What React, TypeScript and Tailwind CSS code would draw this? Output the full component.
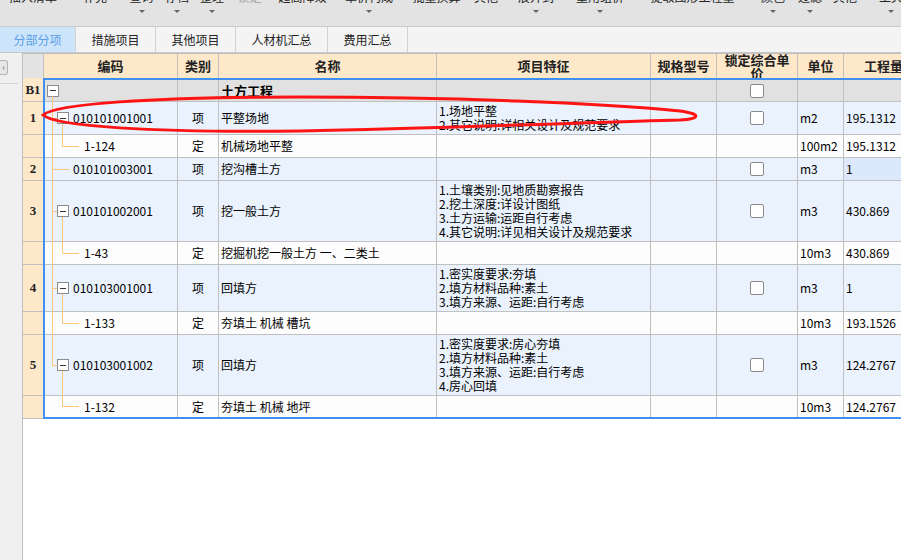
import React from 'react'

type Row = {
  kind: 'group' | 'item' | 'sub'
  code?: string
  box?: boolean
  type?: string
  name?: string
  feats?: string[]
  check?: boolean
  unit?: string
  qty?: string
  h: number
  selQty?: boolean
}

const rows: Row[] = [
  { kind: 'group', box: true, name: '土方工程', check: true, h: 22 },
  { kind: 'item', code: '010101001001', box: true, type: '项', name: '平整场地', feats: ['1.场地平整', '2.其它说明:详相关设计及规范要求'], check: true, unit: 'm2', qty: '195.1312', h: 33 },
  { kind: 'sub', code: '1-124', type: '定', name: '机械场地平整', unit: '100m2', qty: '195.1312', h: 23 },
  { kind: 'item', code: '010101003001', type: '项', name: '挖沟槽土方', check: true, unit: 'm3', qty: '1', h: 23, selQty: true },
  { kind: 'item', code: '010101002001', box: true, type: '项', name: '挖一般土方', feats: ['1.土壤类别:见地质勘察报告', '2.挖土深度:详设计图纸', '3.土方运输:运距自行考虑', '4.其它说明:详见相关设计及规范要求'], check: true, unit: 'm3', qty: '430.869', h: 61 },
  { kind: 'sub', code: '1-43', type: '定', name: '挖掘机挖一般土方 一、二类土', unit: '10m3', qty: '430.869', h: 23 },
  { kind: 'item', code: '010103001001', box: true, type: '项', name: '回填方', feats: ['1.密实度要求:夯填', '2.填方材料品种:素土', '3.填方来源、运距:自行考虑'], check: true, unit: 'm3', qty: '1', h: 47 },
  { kind: 'sub', code: '1-133', type: '定', name: '夯填土 机械 槽坑', unit: '10m3', qty: '193.1526', h: 23 },
  { kind: 'item', code: '010103001002', box: true, type: '项', name: '回填方', feats: ['1.密实度要求:房心夯填', '2.填方材料品种:素土', '3.填方来源、运距:自行考虑', '4.房心回填'], check: true, unit: 'm3', qty: '124.2767', h: 61 },
  { kind: 'sub', code: '1-132', type: '定', name: '夯填土 机械 地坪', unit: '10m3', qty: '124.2767', h: 21 },
]

const nums = [
  { n: 'B1', h: 24 },
  { n: '1', h: 33 },
  { n: '', h: 23 },
  { n: '2', h: 23 },
  { n: '3', h: 61 },
  { n: '', h: 23 },
  { n: '4', h: 47 },
  { n: '', h: 23 },
  { n: '5', h: 61 },
  { n: '', h: 23 },
]

const tools = [
  { w: 66, t: '插入清单' },
  { w: 58, t: '补充' },
  { w: 35, t: '查询', dd: true },
  { w: 36, t: '存档', dd: true },
  { w: 34, t: '整理', dd: true },
  { w: 41, t: '锁定', off: true },
  { w: 65, t: '超高降效' },
  { w: 68, t: '单价构成', dd: true },
  { w: 67, t: '批量换算' },
  { w: 32, t: '其他' },
  { w: 68, t: '展开到', dd: true },
  { w: 60, t: '重用组价', dd: true },
  { w: 125, t: '提取图形工程量' },
  { w: 36, t: '颜色', dd: true },
  { w: 38, t: '过滤', dd: true },
  { w: 32, t: '其他' },
  { w: 60, t: '工具', dd: true },
]

const tabs = [
  { t: '分部分项', w: 'w-[76px]', active: true },
  { t: '措施项目', w: 'w-[80px]' },
  { t: '其他项目', w: 'w-[80px]' },
  { t: '人材机汇总', w: 'w-[92px]' },
  { t: '费用汇总', w: 'w-[80px]' },
]

function Tri() {
  return (
    <svg width="6" height="3" viewBox="0 0 6 3" className="mt-[5px]">
      <path d="M0 0H6L3 3Z" fill="#666" />
    </svg>
  )
}

function Box() {
  return (
    <div className="w-[12px] h-[12px] shrink-0 border border-[#8c8c8c] bg-white flex items-center justify-center">
      <div className="w-[6px] h-[1px] bg-[#333]" />
    </div>
  )
}

function Check() {
  return <div className="w-[14px] h-[14px] rounded-[2px] border border-[#8a8a8a] bg-white" />
}

function HeadCell({ w, children }: { w: string; children: React.ReactNode }) {
  return (
    <div className={`${w} shrink-0 h-full border-r border-[#c0c0c0] flex items-center justify-center font-bold text-[13px] text-[#222] overflow-hidden`}>
      {children}
    </div>
  )
}

export default function App() {
  return (
    <div className="relative w-[901px] h-[560px] overflow-hidden bg-white flex flex-col font-['Noto_Sans_CJK_SC','Noto_Sans',sans-serif] text-[12px] text-black">
      {/* toolbar, scrolled so only the bottom of the labels shows */}
      <div className="h-[27px] shrink-0 bg-[#e3e3e3] border-b border-[#cbcbcb] flex overflow-hidden">
        {tools.map((b, i) => (
          <div key={i} style={{ width: b.w }} className="shrink-0 flex flex-col items-center">
            <div className={`h-[12px] leading-[12px] -mt-[9px] whitespace-nowrap ${b.off ? 'text-[#a8a8a8]' : 'text-[#222]'}`}>{b.t}</div>
            <div className="h-[2px]" />
            {b.dd && <Tri />}
          </div>
        ))}
      </div>

      {/* tabs */}
      <div className="h-[26px] shrink-0 bg-[#f4f4f4] border-b border-[#c8c8c8] flex">
        {tabs.map((t) => (
          <div
            key={t.t}
            className={`${t.w} h-full border-r border-[#d2d2d2] flex items-center justify-center text-[12px] ${t.active ? 'bg-[#cce5fb] text-[#5c9ee6]' : 'text-[#222]'}`}
          >
            {t.t}
          </div>
        ))}
      </div>

      <div className="flex-1 flex min-h-0">
        {/* collapsed side panel */}
        <div className="w-[22px] shrink-0 bg-[#f0f0f0] flex flex-col">
          <div className="mt-[7px] w-[8px] h-[15px] rounded-r-[3px] border border-l-0 border-[#b4b4b4] bg-[#e6e6e6] flex items-center justify-center text-[9px] leading-none text-[#666]">
            ‹
          </div>
          <div className="mt-[8px] w-[18px] h-[1px] bg-[#d4d4d4]" />
        </div>

        {/* grid */}
        <div className="flex-1 border-l border-[#c0c0c0] flex flex-col min-w-0">
          {/* header */}
          <div className="h-[25px] shrink-0 border-t border-[#c0c0c0] flex bg-[#fde8ca]">
            <div className="w-[21px] shrink-0 h-full bg-[#e3e3e3] border-r border-[#c0c0c0]" />
            <HeadCell w="w-[134px]">编码</HeadCell>
            <HeadCell w="w-[41px]">类别</HeadCell>
            <HeadCell w="w-[218px]">名称</HeadCell>
            <HeadCell w="w-[214px]">项目特征</HeadCell>
            <HeadCell w="w-[66px]">规格型号</HeadCell>
            <HeadCell w="w-[81px]">
              <div className="px-[7px] leading-[13px] text-center">锁定综合单价</div>
            </HeadCell>
            <HeadCell w="w-[46px]">单位</HeadCell>
            <HeadCell w="w-[80px]">工程量</HeadCell>
          </div>

          {/* body */}
          <div className="flex shrink-0">
            <div className="w-[20px] shrink-0 flex flex-col">
              {nums.map((r, i) => (
                <div
                  key={i}
                  style={{ height: r.h }}
                  className="border-b border-[#c0c0c0] bg-[#fde8ca] flex items-center justify-center font-['Liberation_Serif',serif] font-bold text-[13px] text-[#222]"
                >
                  {r.n}
                </div>
              ))}
            </div>
            <div className="border-l-2 border-t-2 border-b-2 border-[#3f90f0] flex flex-col">
              {rows.map((r, i) => {
                const bg = r.kind === 'group' ? 'bg-[#e1e1e1]' : r.kind === 'item' ? 'bg-[#eaf2fd]' : 'bg-[#fdfdfd]'
                const last = i === rows.length - 1
                return (
                  <div key={i} style={{ height: r.h }} className={`flex ${bg} ${last ? '' : 'border-b border-[#c0c0c0]'}`}>
                    <div
                      className={`w-[133px] shrink-0 border-r border-[#c0c0c0] flex items-center ${
                        r.kind === 'group' ? 'pl-[2px]' : r.kind === 'sub' ? 'pl-[39px]' : r.box ? 'pl-[12px] gap-[4px]' : 'pl-[28px]'
                      }`}
                    >
                      {r.box && <Box />}
                      {r.code && <span>{r.code}</span>}
                    </div>
                    <div className="w-[41px] shrink-0 border-r border-[#c0c0c0] flex items-center justify-center">{r.type}</div>
                    <div className={`w-[218px] shrink-0 border-r border-[#c0c0c0] flex items-center pl-[2px] whitespace-nowrap ${r.kind === 'group' ? 'font-bold text-[13px]' : ''}`}>
                      {r.name}
                    </div>
                    <div className="w-[214px] shrink-0 border-r border-[#c0c0c0] flex flex-col justify-center pl-[2px] leading-[14px] whitespace-nowrap">
                      {r.feats?.map((f) => <div key={f}>{f}</div>)}
                    </div>
                    <div className="w-[66px] shrink-0 border-r border-[#c0c0c0]" />
                    <div className="w-[81px] shrink-0 border-r border-[#c0c0c0] flex items-center justify-center">{r.check && <Check />}</div>
                    <div className="w-[46px] shrink-0 border-r border-[#c0c0c0] flex items-center pl-[2px]">{r.unit}</div>
                    <div className={`w-[80px] shrink-0 flex items-center pl-[2px] ${r.selQty ? 'bg-[#dce8fb]' : ''}`}>{r.qty}</div>
                  </div>
                )
              })}
            </div>
          </div>
        </div>
      </div>

      {/* tree connectors + red hand-drawn mark */}
      <svg className="absolute inset-0 pointer-events-none" width="901" height="560" viewBox="0 0 901 560">
        <g stroke="#fcc67c" strokeWidth="1" fill="none">
          <path d="M52.5 96V365.5" />
          <path d="M52.5 118.5H57M52.5 169.5H69M52.5 211.5H57M52.5 288.5H57M52.5 365.5H57" />
          <path d="M62.5 124V146.5H79M62.5 217V253.5H79M62.5 294V323.5H79M62.5 371V406.5H79" />
        </g>
        <path
          d="M43 115C55 104 150 97 300 97C450 97 600 103 680 111C702 114 700 119 680 120C600 122 450 128 300 131C150 133 55 126 43 115Z"
          fill="none"
          stroke="#ff1414"
          strokeWidth="3"
        />
      </svg>
    </div>
  )
}
